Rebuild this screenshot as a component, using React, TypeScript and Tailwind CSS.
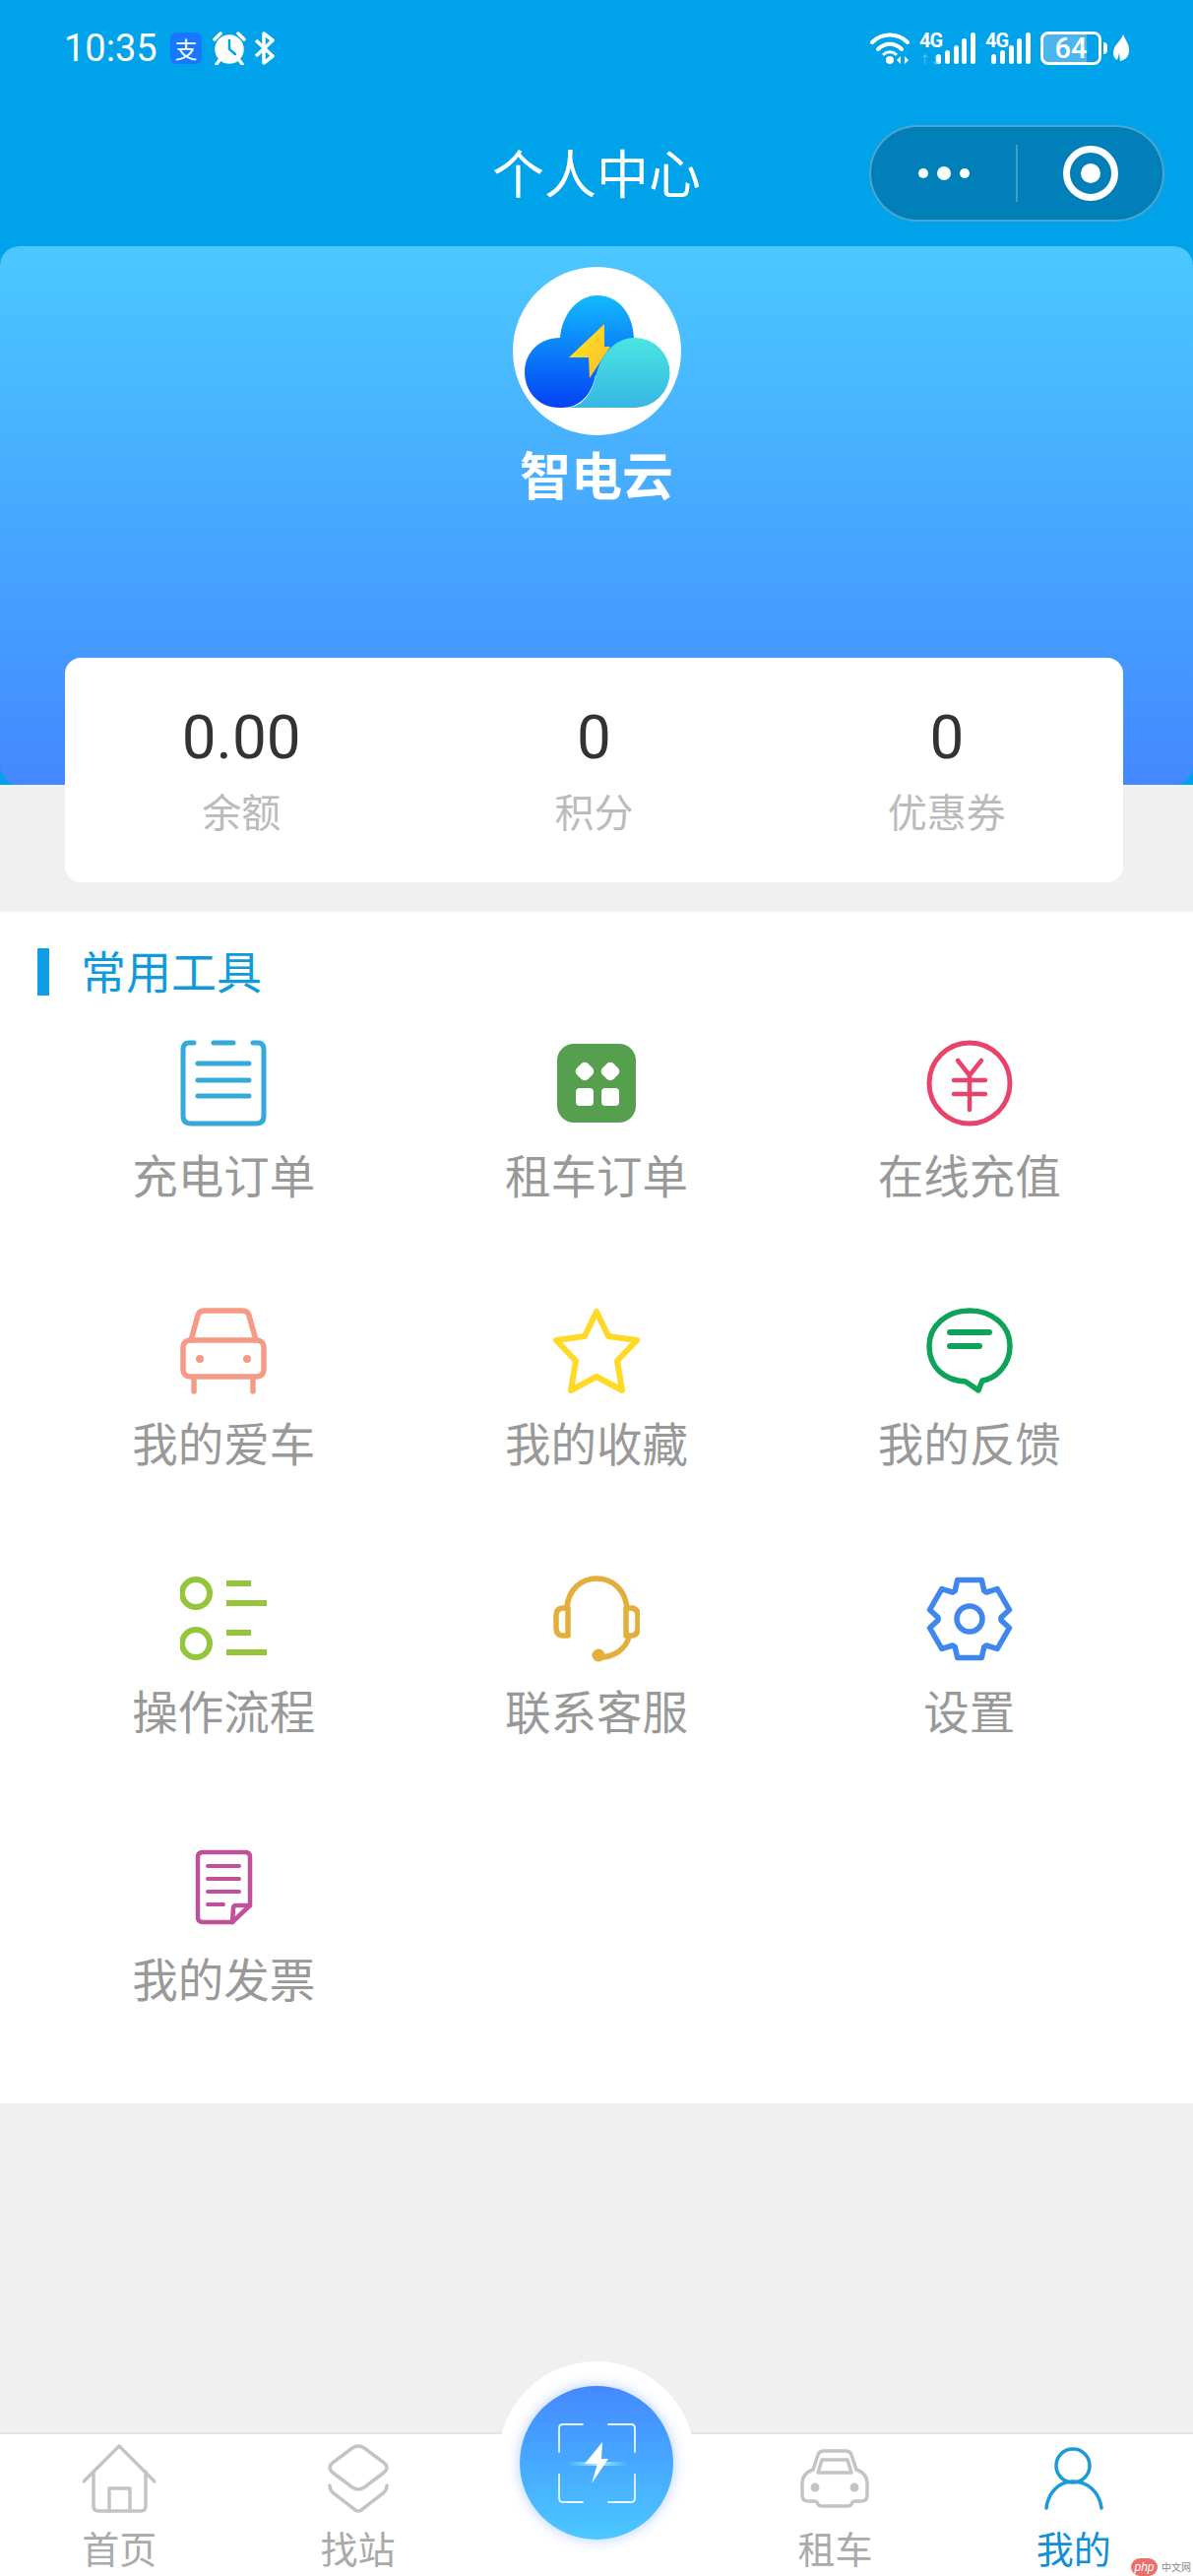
import type { ReactNode } from 'react'

type Tool = { label: string; icon: ReactNode }

function DocIcon() {
  return (
    <svg width="88" height="88" viewBox="0 0 88 88" fill="none" stroke="#35a9dc" strokeWidth="5" strokeLinecap="round">
      <path d="M14 3H9Q3 3 3 10V77Q3 85 11 85H77Q85 85 85 77V10Q85 3 79 3H74" />
      <path d="M34 3H54" strokeWidth="5" />
      <path d="M18 24H70M18 41H70M18 57H70" strokeWidth="5" />
    </svg>
  )
}

function AppsIcon() {
  return (
    <svg width="80" height="80" viewBox="0 0 80 80">
      <rect x="0" y="0" width="80" height="80" rx="17" fill="#559f4f" />
      <rect x="20" y="20" width="16" height="16" rx="5" fill="#fff" transform="rotate(45 28 28)" />
      <rect x="46" y="20" width="16" height="16" rx="5" fill="#fff" transform="rotate(45 54 28)" />
      <rect x="19" y="45" width="18" height="18" rx="4" fill="#fff" />
      <rect x="45" y="45" width="18" height="18" rx="4" fill="#fff" />
    </svg>
  )
}

function YuanIcon() {
  return (
    <svg width="88" height="88" viewBox="0 0 88 88" fill="none" stroke="#e8436a" strokeWidth="5" strokeLinecap="round" strokeLinejoin="round">
      <circle cx="44" cy="44" r="41" />
      <path d="M32 21L44 36L56 21M28 41H60M28 55H60M44 36V71" strokeWidth="4.5" />
    </svg>
  )
}

function CarIcon() {
  return (
    <svg width="88" height="88" viewBox="0 0 88 88" fill="none" stroke="#f59a85" strokeWidth="5.5" strokeLinecap="round" strokeLinejoin="round">
      <path d="M11 33L18 8Q19 3 25 3H63Q69 3 70 8L77 33" />
      <rect x="3" y="33" width="82" height="37" rx="7" />
      <path d="M14 71V85M74 71V85" />
      <circle cx="20" cy="52" r="4" fill="#f59a85" stroke="none" />
      <circle cx="68" cy="52" r="4" fill="#f59a85" stroke="none" />
    </svg>
  )
}

function StarIcon() {
  return (
    <svg width="88" height="88" viewBox="0 0 88 88" fill="none" stroke="#ffd926" strokeWidth="6" strokeLinejoin="round">
      <path d="M44 4L56 29L85 33L65 54L70 84L44 70L18 84L23 54L3 33L32 29Z" />
    </svg>
  )
}

function ChatIcon() {
  return (
    <svg width="88" height="88" viewBox="0 0 88 88" fill="none" stroke="#0fa35a" strokeWidth="5.5" strokeLinejoin="round" strokeLinecap="round">
      <path d="M40 75C18 74 3 60 3 39C3 18 21 3 44 3C67 3 85 18 85 39C85 58 71 72 57 74L53 84Z" />
      <path d="M24 25H64M24 39H54" strokeWidth="6" />
    </svg>
  )
}

function StepsIcon() {
  return (
    <svg width="88" height="88" viewBox="0 0 88 88" fill="none" stroke="#94c53a" strokeWidth="6">
      <circle cx="16" cy="18" r="14" />
      <circle cx="16" cy="69" r="14" />
      <path d="M47 8H72M47 28H88M47 58H72M47 78H88" strokeWidth="6" />
    </svg>
  )
}

function HeadsetIcon() {
  return (
    <svg width="88" height="88" viewBox="0 0 88 88" fill="none" stroke="#e3ae3c" strokeWidth="5.5" strokeLinecap="round" strokeLinejoin="round">
      <path d="M14 33C15 14 29 3 44 3C60 3 73 14 75 33" />
      <path d="M15 33H10Q3 33 3 41V53Q3 61 10 61H15Z" />
      <path d="M74 33H79Q86 33 86 41V53Q86 61 79 61H74Z" />
      <path d="M77 62C74 75 61 83 48 83" />
      <circle cx="46" cy="81" r="6.5" fill="#e3ae3c" stroke="none" />
    </svg>
  )
}

// six teeth, worked out once rather than typed by hand
const GEAR_PATH = Array.from({ length: 6 }, (_, i) => {
  const a = (Math.PI / 3) * i - Math.PI / 2
  const pt = (r: number, off: number) =>
    `${(44 + r * Math.cos(a + off)).toFixed(1)} ${(44 + r * Math.sin(a + off)).toFixed(1)}`
  return `L${pt(32, -0.48)}L${pt(41.5, -0.3)}L${pt(41.5, 0.3)}L${pt(32, 0.48)}`
})
  .join('')
  .replace(/^L/, 'M')

function GearIcon() {
  return (
    <svg width="88" height="88" viewBox="0 0 88 88" fill="none" stroke="#3f86ee" strokeWidth="5.5" strokeLinejoin="round">
      <path d={`${GEAR_PATH}Z`} />
      <circle cx="44" cy="44" r="13" />
    </svg>
  )
}

function InvoiceIcon() {
  return (
    <svg width="88" height="88" viewBox="0 -5 88 88" fill="none" stroke="#c0509a" strokeLinecap="round" strokeLinejoin="round">
      <g strokeWidth="4.5">
        <path d="M71 58V9Q71 4 66 4H23Q18 4 18 9V70Q18 75 23 75H53Z" />
        <path d="M53 75L54 61Q54 58 57 58H71" />
      </g>
      <path d="M28 18H60M28 31H60M28 44H60M28 57H44" strokeWidth="4" />
    </svg>
  )
}

const TOOLS: Tool[] = [
  { label: '充电订单', icon: <DocIcon /> },
  { label: '租车订单', icon: <AppsIcon /> },
  { label: '在线充值', icon: <YuanIcon /> },
  { label: '我的爱车', icon: <CarIcon /> },
  { label: '我的收藏', icon: <StarIcon /> },
  { label: '我的反馈', icon: <ChatIcon /> },
  { label: '操作流程', icon: <StepsIcon /> },
  { label: '联系客服', icon: <HeadsetIcon /> },
  { label: '设置', icon: <GearIcon /> },
  { label: '我的发票', icon: <InvoiceIcon /> },
]

const STATS = [
  { value: '0.00', label: '余额' },
  { value: '0', label: '积分' },
  { value: '0', label: '优惠券' },
]

function Signal({ weak }: { weak?: boolean }) {
  return (
    <span className={`relative flex h-[34px] items-end ${weak ? 'w-[57px]' : 'w-[46px]'}`}>
      <span className="absolute left-0 -top-[1px] font-['Roboto',sans-serif] text-[20px] leading-[20px] font-bold tracking-[-1px] text-white">4G</span>
      {weak && <span className="absolute left-0 bottom-0 text-[11px] leading-[12px] text-[#6cc6f2]">↑↓</span>}
      <svg className="ml-auto" width="40" height="34" viewBox="0 0 40 34" fill="#fff">
        <rect x="0" y="23" width="5" height="10" rx="2.5" />
        <rect x="9" y="19" width="5" height="14" rx="2.5" />
        <rect x="18" y="14" width="5" height="19" rx="2.5" />
        <rect x="26" y="7" width="5" height="26" rx="2.5" />
        <rect x="35" y="1" width="5" height="32" rx="2.5" />
      </svg>
    </span>
  )
}

function StatusBar() {
  return (
    <div className="mt-[32px] flex h-[34px] items-center justify-between pl-[65px] pr-[64px] text-white">
      <div className="flex items-center">
        <span className="w-[100px] font-['Roboto',sans-serif] text-[38px] leading-[34px]">10:35</span>
        <span className="ml-[8px] flex h-[32px] w-[32px] items-center justify-center rounded-[6px] bg-[#1677ff] text-[23px] leading-none">支</span>
        <svg className="ml-[10px]" width="36" height="34" viewBox="0 0 36 34" fill="none" stroke="#fff" strokeWidth="3.5" strokeLinecap="round">
          <circle cx="18" cy="18" r="13" fill="#fff" />
          <path d="M18 9V18L24 23" stroke="#00a2ea" strokeWidth="2.5" />
          <path d="M3 8L9 2M33 8L27 2M8 29L5 33M28 29L31 33" />
        </svg>
        <svg className="ml-[7px]" width="22" height="34" viewBox="0 0 22 34" fill="none" stroke="#fff" strokeWidth="3.5" strokeLinejoin="round">
          <path d="M2 9L19 25L10 32V2L19 9L2 25" />
        </svg>
      </div>
      <div className="flex items-center">
        <svg width="42" height="34" viewBox="0 0 42 34" fill="none" stroke="#fff" strokeWidth="4" strokeLinecap="round">
          <path d="M2 11C12 1 28 1 38 11" />
          <path d="M8 18C15 11 25 11 32 18" />
          <path d="M14 23C17 20 23 20 26 23" strokeWidth="3" />
          <circle cx="20" cy="29" r="4" fill="#fff" stroke="none" />
          <path d="M31 25L27 29L31 33ZM35 25L39 29L35 33Z" fill="#fff" stroke="none" />
        </svg>
        <span className="ml-[8px]"><Signal weak /></span>
        <span className="ml-[10px]"><Signal /></span>
        <span className="relative ml-[10px] flex h-[34px] w-[62px] items-center justify-center overflow-hidden rounded-[8px] border-[3px] border-white bg-[#4db5ee] font-['Roboto',sans-serif] text-[29px] leading-none font-medium">
          <span className="relative z-10">64</span>
          <span className="absolute inset-y-0 right-0 w-[12px] bg-[#00a2ea]" />
        </span>
        <span className="ml-[2px] h-[12px] w-[4px] rounded-r-full bg-white" />
        <svg className="ml-[5px]" width="18" height="30" viewBox="0 0 18 30" fill="#fff">
          <path d="M11 1C14 8 18 12 17 19C16 25 12 27 8 28L7 20L5 27C1 25 0 20 2 15C4 10 9 7 11 1Z" />
        </svg>
      </div>
    </div>
  )
}

function NavBar() {
  return (
    <div className="mt-[61px] grid h-[98px] grid-cols-[1fr_auto_1fr] items-center px-[29px]">
      <div />
      <h1 className="pb-[5px] text-[53px] leading-[88px] font-normal text-white">个人中心</h1>
      <div className="flex h-[98px] w-[300px] items-center justify-self-end rounded-full border-2 border-white/30 bg-[#007fb8]">
        <div className="flex flex-1 items-center justify-center gap-[9px]">
          <span className="h-[10px] w-[10px] rounded-full bg-white" />
          <span className="h-[14px] w-[14px] rounded-full bg-white" />
          <span className="h-[10px] w-[10px] rounded-full bg-white" />
        </div>
        <span className="h-[58px] w-[2px] bg-white/25" />
        <div className="flex flex-1 items-center justify-center">
          <span className="flex h-[56px] w-[56px] items-center justify-center rounded-full border-[7px] border-white">
            <span className="h-[20px] w-[20px] rounded-full bg-white" />
          </span>
        </div>
      </div>
    </div>
  )
}

function Logo() {
  return (
    <svg width="171" height="171" viewBox="0 0 171 171">
      <defs>
        <linearGradient id="logoBlue" gradientUnits="userSpaceOnUse" x1="0" y1="29" x2="0" y2="143">
          <stop offset="0" stopColor="#12bafc" />
          <stop offset="1" stopColor="#0441f5" />
        </linearGradient>
        <linearGradient id="logoCyan" x1="0" y1="0" x2="0" y2="1">
          <stop offset="0" stopColor="#48e6e2" />
          <stop offset="1" stopColor="#38b6e4" />
        </linearGradient>
        <linearGradient id="logoBolt" x1="0" y1="0" x2="1" y2="1">
          <stop offset="0" stopColor="#ffee1c" />
          <stop offset="1" stopColor="#f9b72f" />
        </linearGradient>
      </defs>
      <circle cx="85.5" cy="85.5" r="85.5" fill="#fff" />
      <path
        d="M48 72C50 48 66 29 86 29C106 29 122 46 123 72V110H84C80 130 68 143 50 143H47C27 143 12 127 12 107C12 87 27 72 48 72Z"
        fill="url(#logoBlue)"
      />
      <path d="M93 58L57 92H77L78 113L99 81H93Z" fill="url(#logoBolt)" />
      <path d="M56 143C72 141 80 128 84 112C89 90 103 72 124 72A35.5 35.5 0 0 1 124 143Z" fill="url(#logoCyan)" />
    </svg>
  )
}

function HomeTab() {
  return (
    <svg width="74" height="70" viewBox="0 0 74 70" fill="none" stroke="#c4c4c4" strokeWidth="3.5" strokeLinecap="round" strokeLinejoin="round">
      <path d="M1 38L37 2L73 38" />
      <path d="M11 28V63Q11 68 16 68H59Q64 68 64 63V28" />
      <path d="M27 68V45H48V68" />
    </svg>
  )
}

function StationTab() {
  return (
    <svg width="64" height="70" viewBox="0 0 64 70" fill="none" stroke="#c4c4c4" strokeWidth="3.5" strokeLinecap="round" strokeLinejoin="round">
      <path d="M26 4Q32 0 38 4L58 19Q64 24 58 29L38 44Q32 48 26 44L6 29Q0 24 6 19Z" />
      <path d="M3 42Q3 47 7 50L29 67Q32 69 35 67L57 50Q61 47 61 42" />
    </svg>
  )
}

function RentTab() {
  return (
    <svg width="70" height="60" viewBox="0 0 70 60" fill="none" stroke="#c4c4c4" strokeWidth="3.5" strokeLinejoin="round">
      <path d="M13 21L18 6Q19 2 24 2H46Q51 2 52 6L57 21Q68 25 68 34V47Q68 53 62 53H56Q53 53 52 56Q51 58 48 58H22Q19 58 18 56Q17 53 14 53H8Q2 53 2 47V34Q2 25 13 21Z" />
      <path d="M18 24L22 11H48L52 24Z" />
      <circle cx="15" cy="39" r="4.5" fill="#c4c4c4" stroke="none" />
      <circle cx="55" cy="39" r="4.5" fill="#c4c4c4" stroke="none" />
    </svg>
  )
}

function MineTab() {
  return (
    <svg width="60" height="64" viewBox="0 0 60 64" fill="none" stroke="#1a9ad8" strokeWidth="3.5" strokeLinecap="round">
      <circle cx="29" cy="19" r="17" />
      <path d="M2 62C4 46 15 35 29 35C44 35 56 46 58 62" />
    </svg>
  )
}

function ScanIcon() {
  return (
    <svg width="156" height="156" viewBox="0 0 156 156" fill="none">
      <defs>
        <linearGradient id="scanGlow" x1="0" y1="0" x2="1" y2="0">
          <stop offset="0" stopColor="#9fecff" stopOpacity="0" />
          <stop offset="0.5" stopColor="#a8f0ff" />
          <stop offset="1" stopColor="#9fecff" stopOpacity="0" />
        </linearGradient>
      </defs>
      <g stroke="#e8f6ff" strokeWidth="1.8" strokeLinecap="round">
        <path d="M40 67V43Q40 39 44 39H64" />
        <path d="M90 39H113Q117 39 117 43V67" />
        <path d="M40 90V114Q40 118 44 118H64" />
        <path d="M90 118H113Q117 118 117 114V90" />
      </g>
      <rect x="48" y="77" width="62" height="4" fill="url(#scanGlow)" />
      <path d="M84 57L66 79H79L73 99L90 74H83Z" fill="#fff" />
    </svg>
  )
}

function TabItem({ label, icon, active }: { label: string; icon: ReactNode; active?: boolean }) {
  return (
    <div className="flex flex-col items-center pt-[10px]">
      <div className="flex h-[70px] items-center justify-center">{icon}</div>
      <span className={`mt-[16px] text-[38px] leading-[38px] ${active ? 'text-[#0f8fd8]' : 'text-[#aaaaaa]'}`}>{label}</span>
    </div>
  )
}

export default function App() {
  return (
    <div className="relative flex h-[2616px] w-[1212px] flex-col overflow-hidden bg-[#f0f0f0] font-['Noto_Sans_CJK_SC','Noto_Sans',sans-serif]">
      <div className="flex h-[797px] flex-col bg-[#00a2ea]">
        <StatusBar />
        <NavBar />
        <div className="mt-[25px] flex flex-1 flex-col items-center rounded-[20px] bg-gradient-to-b from-[#4cc8ff] to-[#4488ff] pt-[21px]">
          <Logo />
          <span className="mt-[7px] text-[52px] leading-[64px] font-bold text-white">智电云</span>
        </div>
      </div>

      <div className="relative ml-[66px] mr-[71px] -mt-[129px] grid h-[228px] grid-cols-3 rounded-[16px] bg-white">
        {STATS.map((s) => (
          <div key={s.label} className="flex flex-col items-center pt-[46px]">
            <span className="font-['Roboto',sans-serif] text-[62px] leading-[70px] text-[#333333]">{s.value}</span>
            <span className="mt-[14px] text-[40px] leading-[50px] text-[#bbbbbb]">{s.label}</span>
          </div>
        ))}
      </div>

      <section className="mt-[30px] h-[1210px] bg-white">
        <div className="flex items-start pl-[38px] pt-[37px]">
          <span className="h-[48px] w-[12px] bg-[#0d9ee4]" />
          <span className="-mt-[3px] ml-[32px] text-[46px] leading-[48px] text-[#0f9bdb]">常用工具</span>
        </div>
        <div className="mt-[45px] grid grid-cols-3 px-[38px]">
          {TOOLS.map((t) => (
            <div key={t.label} className="flex h-[272px] flex-col items-center">
              <div className="flex h-[88px] items-center justify-center">{t.icon}</div>
              <span className="mt-[21px] text-[46.5px] leading-[54px] text-[#999999]">{t.label}</span>
            </div>
          ))}
        </div>
      </section>

      <nav className="relative mt-auto grid h-[146px] grid-cols-5 border-t-2 border-[#e5e5e5] bg-white">
        <TabItem label="首页" icon={<HomeTab />} />
        <TabItem label="找站" icon={<StationTab />} />
        <div className="relative">
          <div className="absolute left-1/2 -top-[74px] h-[200px] w-[200px] -translate-x-1/2 rounded-full bg-white" />
          <div className="absolute left-1/2 -top-[49px] h-[156px] w-[156px] -translate-x-1/2 rounded-full bg-gradient-to-b from-[#4488ff] to-[#4cc8ff] shadow-[0_0_14px_rgba(68,136,255,0.4)]">
            <ScanIcon />
          </div>
        </div>
        <TabItem label="租车" icon={<RentTab />} />
        <TabItem label="我的" icon={<MineTab />} active />
      </nav>

      <div className="absolute bottom-0 right-[2px] flex items-center">
        <span className="flex h-[18px] w-[27px] items-center justify-center rounded-full bg-[#ec6f6a] font-['Liberation_Sans',sans-serif] text-[12px] leading-none text-white italic">php</span>
        <span className="ml-[4px] text-[10px] leading-[18px] text-[#888888]">中文网</span>
      </div>
    </div>
  )
}
